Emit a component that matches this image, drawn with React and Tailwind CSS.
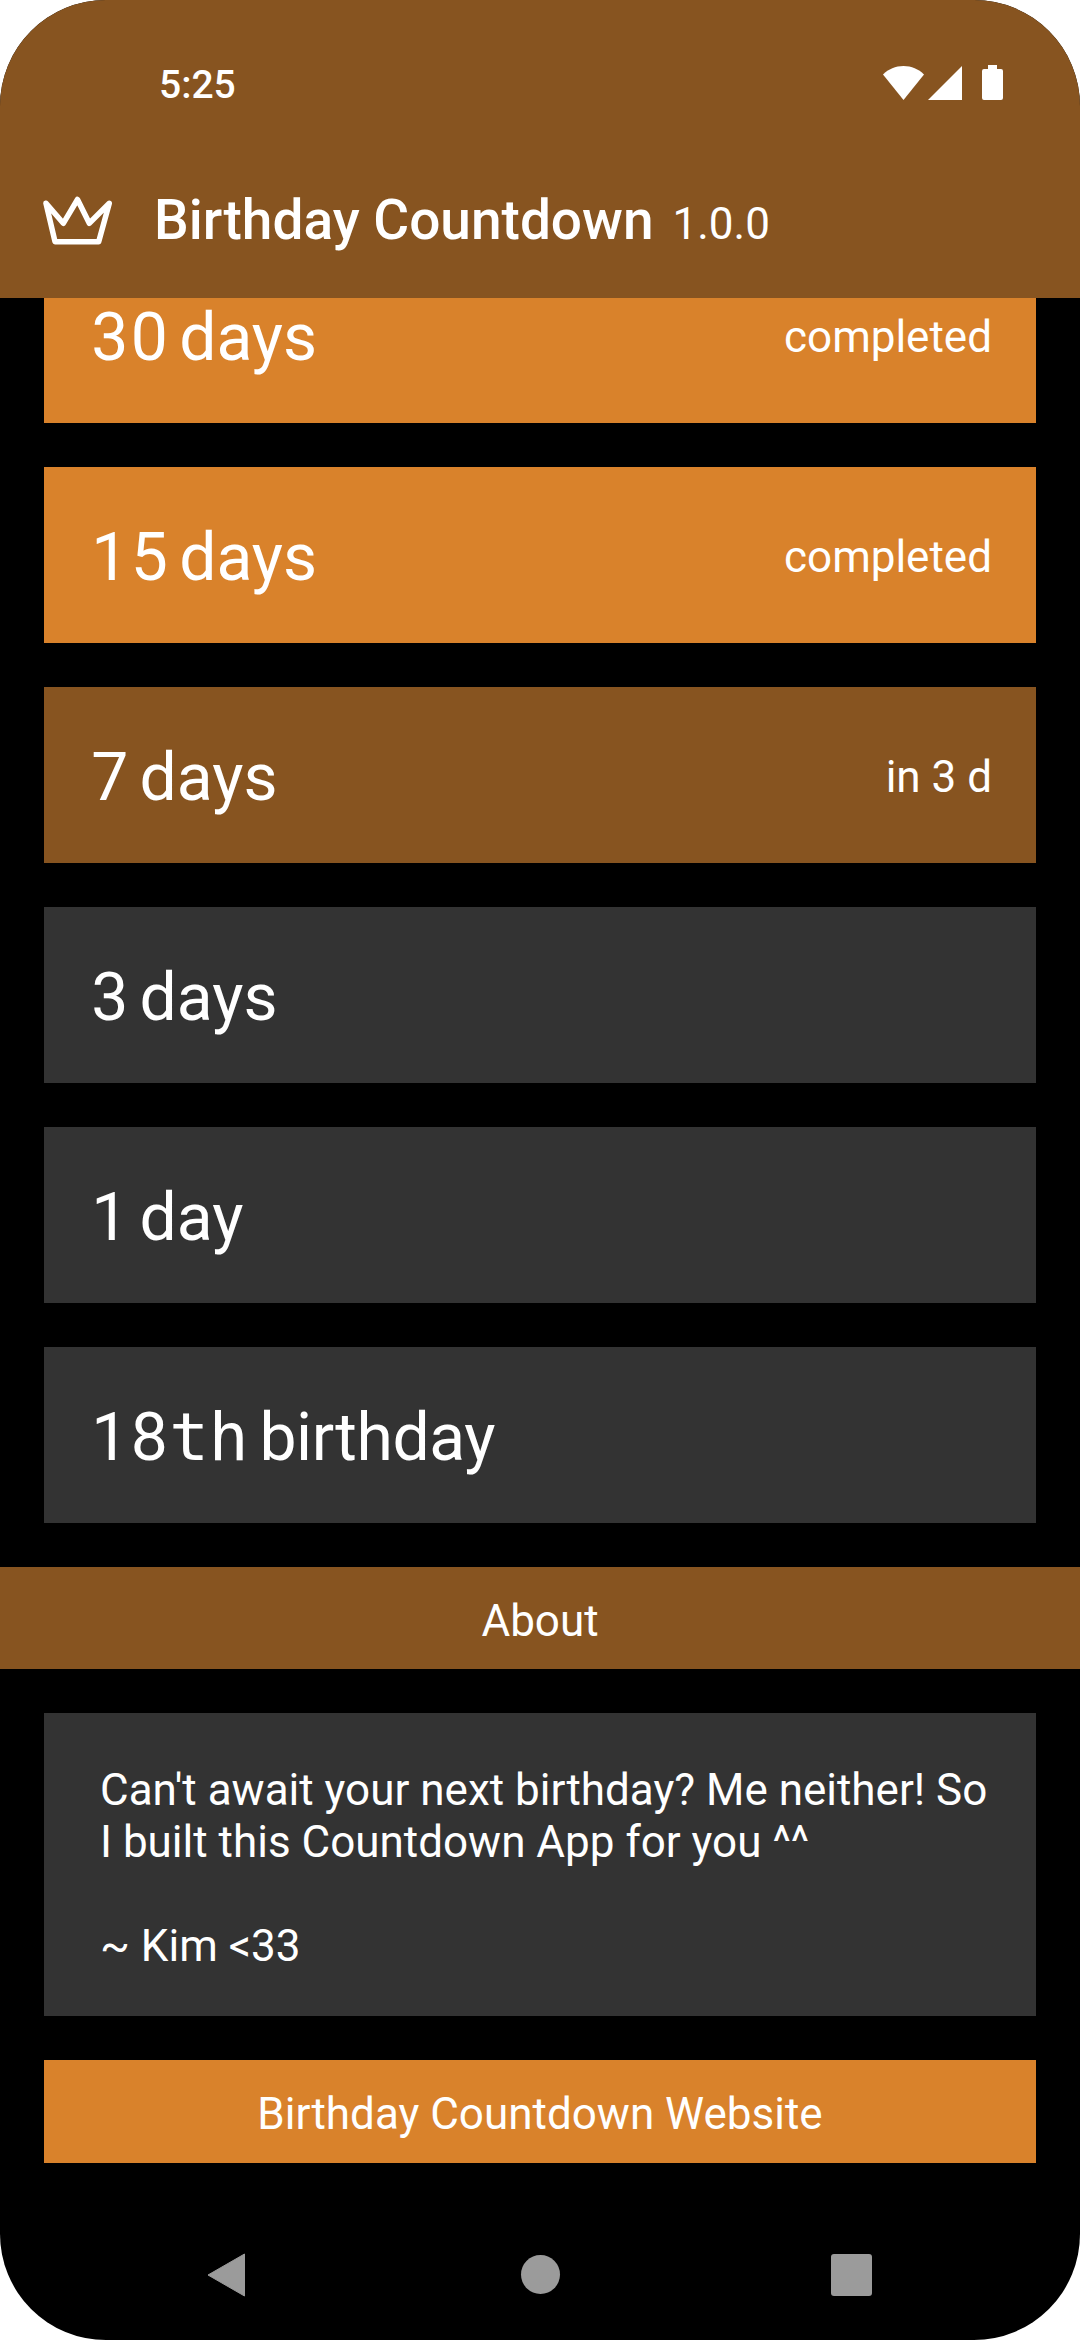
const font = { fontFamily: 'Roboto, sans-serif' };

function Wifi() {
    return (
        <svg width="41" height="34" viewBox="0 0 41 34" fill="#fff">
            <path d="M0 8.5C5.5 3 12.5 0 20.5 0S35.5 3 41 8.5L20.5 34z" />
        </svg>
    );
}

function Signal() {
    return (
        <svg width="34" height="34" viewBox="0 0 34 34" fill="#fff">
            <path d="M34 0v34H0z" />
        </svg>
    );
}

function Battery() {
    return (
        <svg width="21" height="35" viewBox="0 0 21 35" fill="#fff">
            <path d="M6 0h9v4h4a2 2 0 0 1 2 2v27a2 2 0 0 1-2 2H2a2 2 0 0 1-2-2V6a2 2 0 0 1 2-2h4z" />
        </svg>
    );
}

function Crown() {
    return (
        <svg className="shrink-0" width="70" height="49" viewBox="0 0 70 49" fill="none" stroke="#fff" strokeWidth="5.5" strokeLinejoin="round" strokeLinecap="round">
            <path d="M3 7.3 L20.3 27.3 L34.5 3.5 L46.3 27.3 L66.3 7.3 L55.7 45.7 H12z" />
        </svg>
    );
}

// the numbers on the cards sit in fixed width slots, "th" comes out monospaced
function Slots({ text }) {
    return text.split('').map((c, i) => (
        <span
            key={i}
            className="inline-block w-[39.6px] text-center"
            style={/[a-z]/.test(c) ? { fontFamily: '"DejaVu Sans Mono", monospace' } : undefined}
        >
            {c}
        </span>
    ));
}

function CountRow({ mono, rest, gap, status, color }) {
    return (
        <div className={`h-[176px] flex items-center justify-between pl-[46px] pr-[44px] text-white ${color}`}>
            <span className="text-[66px] leading-[80px] mt-[6px] whitespace-nowrap">
                <Slots text={mono} />
                <span className={gap}>{rest}</span>
            </span>
            {status && <span className="text-[44px] leading-[60px] mt-[4px]">{status}</span>}
        </div>
    );
}

export default function App() {
    const rows = [
        { mono: '30', rest: 'days', gap: 'ml-[10px]', status: 'completed', color: 'bg-[#d9822b]' },
        { mono: '15', rest: 'days', gap: 'ml-[10px]', status: 'completed', color: 'bg-[#d9822b]' },
        { mono: '7', rest: 'days', gap: 'ml-[10px]', status: 'in 3 d', color: 'bg-[#875420]' },
        { mono: '3', rest: 'days', gap: 'ml-[10px]', color: 'bg-[#333333]' },
        { mono: '1', rest: 'day', gap: 'ml-[10px]', color: 'bg-[#333333]' },
        { mono: '18th', rest: 'birthday', gap: 'ml-[11px] tracking-[-0.4px]', color: 'bg-[#333333]' },
    ];

    return (
        <div className="w-[1080px] h-[2340px] bg-white" style={font}>
            <div className="w-full h-full bg-black rounded-[106px] overflow-hidden flex flex-col relative">
                {/* Status + app bar */}
                <header className="relative z-10 h-[298px] shrink-0 bg-[#875420] text-white">
                    <div className="flex items-center justify-between h-[165px] pl-[159px] pr-[77px]">
                        <span className="text-[39px] leading-[46px] font-medium mt-[4px]">5:25</span>
                        <div className="flex items-center">
                            <Wifi />
                            <span className="w-[4px]" />
                            <Signal />
                            <span className="w-[20px]" />
                            <Battery />
                        </div>
                    </div>
                    <div className="flex items-center pl-[43px] h-[62px] mt-[24px]">
                        <Crown />
                        <div className="ml-[41px] flex items-baseline whitespace-nowrap">
                            <span className="text-[55px] font-medium">Birthday Countdown</span>
                            <span className="ml-[19px] text-[44px]">1.0.0</span>
                        </div>
                    </div>
                </header>

                {/* Scrolled list */}
                <main className="flex-1 overflow-hidden text-white">
                    <div className="-mt-[51px] flex flex-col gap-[44px]">
                        <div className="flex flex-col gap-[44px] px-[44px]">
                            {rows.map((r) => (
                                <CountRow key={r.mono} {...r} />
                            ))}
                        </div>
                        <div className="h-[102px] bg-[#875420] flex items-center justify-center text-[44px] pt-[5px]">About</div>
                        <div className="mx-[44px] h-[303px] bg-[#333333] pl-[56px] pr-[44px] pt-[51px] text-[44px] leading-[52px]">
                            <p>Can't await your next birthday? Me neither! So I built this Countdown App for you ^^</p>
                            <p className="mt-[52px]">~ Kim &lt;33</p>
                        </div>
                        <div className="mx-[44px] h-[103px] bg-[#d9822b] flex items-center justify-center text-[44px] pt-[5px]">Birthday Countdown Website</div>
                    </div>
                </main>

                {/* Nav bar */}
                <nav className="absolute bottom-0 left-0 right-0 h-[126px]">
                    <svg className="absolute left-[207px] top-[39px]" width="38" height="44" viewBox="0 0 38 44" fill="#9b9b9b">
                        <path d="M37.5 1v42L1 22z" stroke="#9b9b9b" strokeLinejoin="round" strokeWidth="1" />
                    </svg>
                    <div className="absolute left-[521px] top-[41px] w-[39px] h-[39px] rounded-full bg-[#9b9b9b]" />
                    <div className="absolute left-[831px] top-[40px] w-[41px] h-[42px] rounded-[3px] bg-[#9b9b9b]" />
                </nav>
            </div>
        </div>
    );
}
